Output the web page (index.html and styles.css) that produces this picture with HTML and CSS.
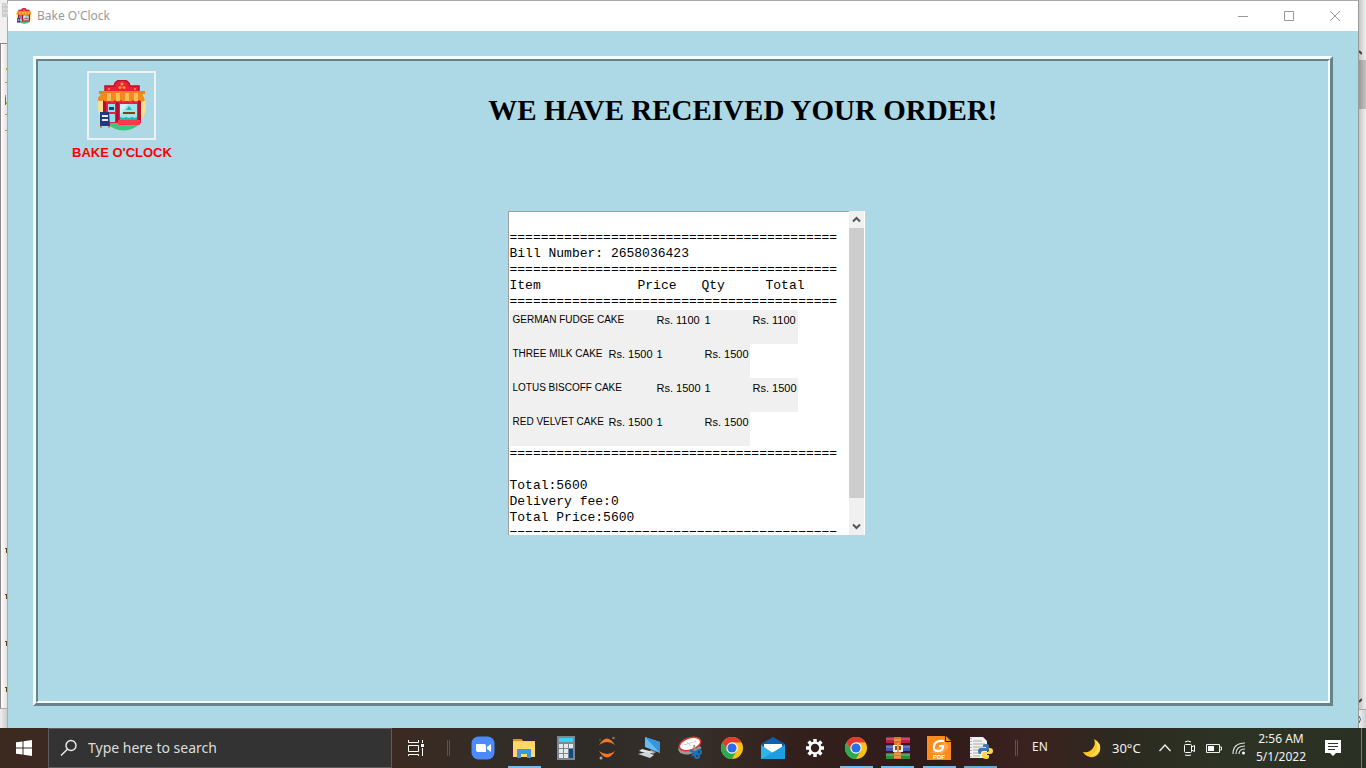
FILE: index.html
```
<!DOCTYPE html>
<html lang="en">
<head>
<meta charset="utf-8">
<title>Bake O'Clock</title>
<link rel="stylesheet" href="styles.css">
</head>
<body>
<svg class="defs" aria-hidden="true">
  <symbol id="shop" viewBox="0 0 48 51">
    <circle cx="24" cy="26" r="24" fill="#ffe08a"/>
    <path d="M8 43h35a24 24 0 0 1-35 0z" fill="#3cc480"/>
    <path d="M7 11V6h9c0-8 16-8 16 0h9v5z" fill="#e6213f"/>
    <path d="M7 11V6h9c0-8 16-8 16 0h9v5" fill="none" stroke="#b5102f" stroke-width="1.5"/>
    <circle cx="24" cy="4" r="1.6" fill="#ff9811"/><circle cx="22" cy="7.500" r="1.600" fill="#ff9811"/><circle cx="26" cy="7.500" r="1.600" fill="#ff9811"/>
    <circle cx="11" cy="9" r="1" fill="#ff9811"/><circle cx="37" cy="9" r="1" fill="#ff9811"/>
    <path d="M5 20h38v23H5z" fill="#e6213f"/>
    <path d="M5 20h3v14H5zM18 22h3v20h-3zM40 20h3v20h-3z" fill="#b5102f"/>
    <path d="M10 24h7v18h-7z" fill="#8fe0e8"/><path d="M10 32h7v2h-7z" fill="#e6213f"/><path d="M11 27h5v3h-5z" fill="#1d3f86"/>
    <path d="M22 24h17v15H22z" fill="#9fe4ea"/><path d="M22 24l8 0-8 11z" fill="#c9f4f6"/>
    <path d="M31 26l3 4h-6z" fill="#18bdb0"/><path d="M25 32h12v2H25z" fill="#8a3a20"/>
    <path d="M22 37l3 1 3-1 3 1 3-1 3 1 2-1v3H22z" fill="#18bdb0"/>
    <path d="M20 40h22v5H20z" fill="#ff3b4b"/>
    <path d="M1 11h46v3H1z" fill="#f57f17"/>
    <path d="M4 13h40l3 7q-3 3-6 0-3 3-6 0-3 3-6 0-3 3-6 0-3 3-6 0-3 3-6 0-3 3-6 0-3 3-6-1z" fill="#f58a1b"/>
    <path d="M9 13h4v8H9zM18 13h4v8h-4zM27 13h4v8h-4zM36 13h4v8h-4z" fill="#f3c05a"/>
    <path d="M3 46v2M11 46v2" stroke="#c98a5a" stroke-width="2"/>
    <path d="M2 32h9l1 14H2z" fill="#203a7d"/><path d="M4 36h6M4 40h6" stroke="#e8ecf5" stroke-width="2"/>
  </symbol>
  <symbol id="chrome" viewBox="0 0 24 24">
    <circle cx="12" cy="12" r="11" fill="#fbc116"/>
    <path d="M12 6.500H21.530A11 11 0 0 0 2.470 6.500L7.200 14.700 12 12z" fill="#e33b2e"/>
    <path d="M2.470 6.500A11 11 0 0 0 12 23L16.800 14.700H7.200z" fill="#2da94f"/>
    <circle cx="12" cy="12" r="5.700" fill="#fff"/><circle cx="12" cy="12" r="4.600" fill="#2a6fe8"/>
  </symbol>
</svg>

<div class="screen">
  <div class="desktop">
    <aside class="behind behind-left" aria-hidden="true">
      <div class="behind-bar"><svg width="6" height="16" viewBox="0 0 6 16"><path d="M0 1h6v14H0z" fill="#ccc"/><path d="M1 3h5M1 7h5M1 11h5" stroke="#eee" stroke-dasharray="2 1"/></svg></div>
      <div class="behind-page">
        <svg width="2" height="660"><g fill="#b5a800"><path d="M1 24h1v2h-1zM0 38h2v1h-2zM0 51h1v2h-1zM0 58h2v2h-2zM0 70h2v1h-2zM0 86h2v1h-2z"/></g><path d="M0 53h1v8H0z" fill="#2a9a2a"/><path d="M0 504h2v1H0zM1 504h1v5H1zM0 550h2v1H0zM1 550h1v5H1zM0 597h2v1H0zM1 597h1v5H1zM0 643h2v1H0zM1 643h1v5H1z" fill="#6a3a10"/></svg>
      </div>
      <div class="behind-foot"></div>
    </aside>

    <main class="window">
      <header class="titlebar">
        <svg class="app-icon"><use href="#shop"/></svg>
        <span class="app-name">Bake O'Clock</span>
        <button class="win-btn" aria-label="Minimize"><svg width="12" height="12"><path d="M1 6.500h10" stroke="#999"/></svg></button>
        <button class="win-btn" aria-label="Maximize"><svg width="12" height="12"><path d="M1.500 1.500h9v9h-9z" fill="none" stroke="#999"/></svg></button>
        <button class="win-btn" aria-label="Close"><svg width="12" height="12"><path d="M1 1l10 10M11 1L1 11" stroke="#999"/></svg></button>
      </header>

      <div class="client">
        <div class="ridge">
          <div class="ridge-inner">
            <div class="head">
              <div class="brand">
                <div class="logo"><svg width="48" height="51"><use href="#shop"/></svg></div>
                <div class="brand-name">BAKE O'CLOCK</div>
              </div>
              <h1>WE HAVE RECEIVED YOUR ORDER!</h1>
            </div>

            <div class="receipt-area">
              <section class="receipt" aria-label="Bill">
                <div class="bill">
                  <p>&nbsp;</p>
                  <p>==========================================</p>
                  <p>Bill Number: 2658036423</p>
                  <p>==========================================</p>
                  <table>
                    <thead>
                      <tr><th>Item</th><th>Price</th><th>Qty</th><th>Total</th></tr>
                      <tr><td>==========================================</td></tr>
                    </thead>
                    <tbody>
                      <tr class="wide"><td>GERMAN FUDGE CAKE</td><td>Rs. 1100</td><td>1</td><td>Rs. 1100</td></tr>
                      <tr><td>THREE MILK CAKE</td><td>Rs. 1500</td><td>1</td><td>Rs. 1500</td></tr>
                      <tr class="wide"><td>LOTUS BISCOFF CAKE</td><td>Rs. 1500</td><td>1</td><td>Rs. 1500</td></tr>
                      <tr><td>RED VELVET CAKE</td><td>Rs. 1500</td><td>1</td><td>Rs. 1500</td></tr>
                    </tbody>
                  </table>
                  <p>==========================================</p>
                  <p>&nbsp;</p>
                  <p>Total:5600</p>
                  <p>Delivery fee:0</p>
                  <p>Total Price:5600</p>
                  <p class="cut">==========================================</p>
                </div>
                <div class="scrollbar">
                  <button aria-label="Scroll up"><svg width="9" height="7"><path d="M1 5.500L4.500 2 8 5.500" fill="none" stroke="#555" stroke-width="2"/></svg></button>
                  <div class="thumb"></div>
                  <button aria-label="Scroll down"><svg width="9" height="7"><path d="M1 1.500L4.500 5 8 1.500" fill="none" stroke="#555" stroke-width="2"/></svg></button>
                </div>
              </section>
            </div>
          </div>
        </div>
      </div>
    </main>

    <aside class="behind behind-right" aria-hidden="true">
      <div class="behind-bar"></div>
      <div class="track"><svg width="3" height="5"><path d="M0 1l3 3" stroke="#444" stroke-width="2"/></svg><div class="track-thumb"></div><svg width="3" height="5"><path d="M0 4l3-3" stroke="#444" stroke-width="2"/></svg></div>
      <div class="behind-foot"><svg width="3" height="16"><path d="M0 6q3 3 0 7" fill="none" stroke="#345a80"/></svg></div>
    </aside>
  </div>

  <footer class="taskbar">
    <button class="start" aria-label="Start"><svg width="16" height="16"><path d="M0 2.300L6.500 1.400V7.500H0zM7.500 1.200L16 0V7.500H7.500zM0 8.500H6.500V14.600L0 13.700zM7.500 8.500H16V16L7.500 14.800z" fill="#fff"/></svg></button>
    <label class="search">
      <svg width="18" height="18"><circle cx="11" cy="6.500" r="5" fill="none" stroke="#eee" stroke-width="1.400"/><path d="M7.400 10.200L1 16.600" stroke="#eee" stroke-width="1.400"/></svg>
      <input type="text" placeholder="Type here to search" aria-label="Type here to search">
    </label>
    <button class="view" aria-label="Task view"><svg width="18" height="16"><path d="M1.500 0v2.500h10V0M1.500 5.500h10v6h-10zM1.500 16v-1.500h10V16M15.500 0v3M15.500 8v8" fill="none" stroke="#fff"/><path d="M14 4h3v3h-3z" fill="#fff"/></svg></button>
    <span class="sep"></span>
    <nav class="apps" aria-label="Applications">
      <button aria-label="Zoom"><svg width="24" height="24"><rect x=".5" y=".5" width="23" height="23" rx="7" fill="#4a8cff"/><path d="M5 8h8q2 0 2 2v6H7q-2 0-2-2zM16 11l4-3v8l-4-3z" fill="#fff"/></svg></button>
      <button class="open" aria-label="File Explorer"><svg width="24" height="24"><path d="M1 3h8l2 2h12v16H1z" fill="#fbc94b"/><path d="M1 3h8l1.500 2H1z" fill="#d99a12"/><path d="M1 6h22v15H1z" fill="#ffd867"/><path d="M5 22v-8q0-1 1-1h12q1 0 1 1v8h-4v-4H9v4z" fill="#3e96dc"/></svg></button>
      <button aria-label="Calculator"><svg width="24" height="24"><path d="M3 0h18v24H3z" fill="#7c8790"/><path d="M5 2h14v4H5z" fill="#35d4f5"/><path d="M5 8h4v4H5zM10 8h4v4h-4zM15 8h4v4h-4zM5 13h4v4H5zM10 13h4v4h-4zM5 18h4v4H5zM10 18h4v4h-4z" fill="#e4e9ec"/><path d="M15 13h4v9h-4z" fill="#134a86"/></svg></button>
      <button aria-label="Jupyter"><svg width="24" height="24"><path d="M4 9q8-13 16 0-8-6-16 0zM4 15q8 13 16 0-8 6-16 0z" fill="#f37726"/><circle cx="18.500" cy="2" r="1.300" fill="#777"/><circle cx="6" cy="22" r="1.500" fill="#aaa"/><circle cx="5" cy="4" r=".8" fill="#777"/></svg></button>
      <button aria-label="Remote desktop"><svg width="24" height="24"><path d="M8 1l15 5v11L8 11z" fill="#65bdf4"/><path d="M8 1l15 5v11z" fill="#3596df"/><path d="M14 14l5 2-3 2-4-2z" fill="#9ea6ad"/><path d="M5 13l11 3-4 2-10-3z" fill="#e1e5e8"/><path d="M1 18l9-2 7 3-4 3z" fill="#cfd4d8"/></svg></button>
      <button aria-label="Snipping Tool"><svg width="24" height="24"><ellipse cx="11" cy="11" rx="11" ry="7" transform="rotate(-18 11 11)" fill="#999"/><ellipse cx="12" cy="8" rx="11" ry="6" transform="rotate(-18 12 8)" fill="#fff" stroke="#d33a36" stroke-width="1.500"/><path d="M6 9l12-4M9 6l4 4" stroke="#ccc"/><path d="M17 15l-1-6M18 15l5-4" stroke="#999" stroke-width="2"/><g fill="none" stroke="#1674b9" stroke-width="2"><circle cx="19" cy="20" r="2"/><circle cx="21" cy="16" r="2"/><path d="M12 15l5 1 2 3M14 20l5-5"/></g></svg></button>
      <button aria-label="Google Chrome"><svg width="24" height="24"><use href="#chrome"/></svg></button>
      <button aria-label="Mail"><svg width="24" height="24"><path d="M0 8l12-7 12 7v15H0z" fill="#0f5fae"/><path d="M3 8h18v9H3z" fill="#fff"/><path d="M0 9l12 8L24 9v14H0z" fill="#2db4ee"/><path d="M0 23l14-8L24 9v14z" fill="#1b9fe4"/></svg></button>
      <button aria-label="Settings"><svg width="24" height="24"><g stroke="#fff" stroke-width="3.500"><path d="M12 3v18M3 12h18M5.600 5.600l12.800 12.800M18.400 5.600L5.600 18.400"/></g><circle cx="12" cy="12" r="6.500" fill="#fff"/><circle cx="12" cy="12" r="4.200" fill="#33201d"/></svg></button>
      <button class="open" aria-label="Google Chrome window"><svg width="24" height="24"><use href="#chrome"/></svg></button>
      <button class="open" aria-label="WinRAR"><svg width="24" height="24"><path d="M0 1h24v6H0z" fill="#b8214a"/><path d="M0 9h24v6H0z" fill="#4c52b5"/><path d="M0 17h24v6H0z" fill="#2f8b3a"/><path d="M0 3h24M0 11h24M0 19h24" stroke="#ffffff66"/><path d="M8 1h7v22H8z" fill="#d9742c"/><path d="M8 4h7M8 18h7M8 21h7" stroke="#f5b56a"/><path d="M7 9h10v7H7z" fill="#eee"/><path d="M9 10h2v4H9zM13 10h2v4h-2z" fill="#8a4b20"/><path d="M11 7h2v9h-2z" fill="#e7a23a"/></svg></button>
      <button class="open" aria-label="Foxit PDF"><svg width="24" height="24"><path d="M0 0h18v6h6v18H0z" fill="#fb8b1e"/><path d="M19 0l5 5h-5z" fill="#fb8b1e"/><path d="M4 17L18 5l4 6-7 7z" fill="#ffa64d"/><path d="M17 5q-9-1-10 5-1 5 4 5 5 0 5-5h-4" fill="none" stroke="#fff" stroke-width="2.200"/><text x="12" y="23" class="pdf">PDF</text></svg></button>
      <button class="open split" aria-label="Python"><svg width="24" height="24"><path d="M1 1h13l4 4v17H1z" fill="#f1f1f1"/><path d="M4 5h9M4 8h12M4 11h12M4 14h8M4 17h7M4 20h7" stroke="#aaa"/><path d="M2 2v20" stroke="#777" stroke-dasharray="1 2"/><path d="M14 9q0-1 3-1t3 2v3q0 2-2 2h-4q-2 0-2 2v1h-1q-2 0-2-3 0-3 3-3h5v-1h-3z" fill="#3c78b0"/><path d="M20 12h1q3 0 3 3t-3 3h-4v1h3v2q0 2-3 2t-4-2v-3q0-2 2-2h3q2 0 2-2z" fill="#ffd544"/></svg></button>
    </nav>
    <span class="sep"></span>
    <button class="lang">EN</button>
    <button class="weather"><svg width="20" height="20"><path d="M12 1q8 4 6 12-3 7-10 6-5-1-7-5 7 1 10-4 3-4 1-9z" fill="#ffc72b"/><path d="M13 2q7 4 4 11-3 5-9 5 5-2 7-7 1-4-2-9z" fill="#ffe25a"/></svg>30°C</button>
    <div class="tray">
      <button aria-label="Show hidden icons"><svg width="14" height="16"><path d="M1.500 11L7 5l5.500 6" fill="none" stroke="#eee" stroke-width="1.400"/></svg></button>
      <button aria-label="Camera"><svg width="14" height="16"><rect x="2.500" y="4.500" width="7" height="8" rx="1" fill="none" stroke="#fff"/><path d="M9.500 7l3-1.500v6l-3-1.500M3 2q3-2 6 0M3 15q3 1 6 0" fill="none" stroke="#fff"/></svg></button>
      <button aria-label="Battery"><svg width="16" height="16"><path d="M.5 4.500h13v8H.5zM14 7h1.500v3H14" fill="none" stroke="#eee"/><path d="M2 6h6v5H2z" fill="#fff"/></svg></button>
      <button aria-label="Network"><svg width="14" height="16"><g fill="none" stroke="#ddd" stroke-width="1.200"><path d="M1 14Q1 3 13 3M4 14Q4 6 13 6M7 14Q7 9 13 9"/></g><circle cx="11.500" cy="13" r="1.500" fill="#fff"/></svg></button>
    </div>
    <button class="clock"><span>2:56 AM</span><span>5/1/2022</span></button>
    <button class="notice" aria-label="Notifications"><svg width="16" height="16"><path d="M0 0h16v13h-5l-3 3-3-3H0z" fill="#fff"/><path d="M3 3.500h10M3 6.500h10M3 9.500h7" stroke="#333"/></svg></button>
    <span class="peek"></span>
  </footer>
</div>
</body>
</html>
```
FILE: styles.css
```
* { box-sizing: border-box; }
body { margin: 0; font-family: "Noto Sans", "Open Sans", sans-serif; }
p, h1 { margin: 0; }
button { border: 0; padding: 0; background: none; color: inherit; font: inherit; display: flex; align-items: center; justify-content: center; }
svg { display: block; flex: none; }
.defs { display: none; }

.screen { height: 100vh; display: flex; flex-direction: column; }
.desktop { flex: 1; display: flex; min-height: 0; background: #f0f0f0; }

/* Windows partly covered by the main one */
.behind { display: flex; flex-direction: column; }
.behind-left { width: 8px; border-right: 1px solid #b5a8a5; }
.behind-right { width: 7px; background: linear-gradient(90deg, #c4c4c4, #f0f0f0); }
.behind-bar { height: 43px; padding-top: 2px; padding-left: 2px; }
.behind-right .behind-bar { height: 41px; }
.behind-page {
  flex: 1;
  min-height: 0;
  overflow: hidden;
  display: flex;
  justify-content: flex-end;
  border-top: 1px solid #888;
  border-left: 1px solid #888;
  border-bottom: 1px solid #aaa;
  background: linear-gradient(90deg, #fff, #e4e0e0);
}
.behind-foot { height: 19px; background: linear-gradient(90deg, #eee, #ccc); }
.behind-right .behind-foot { border-top: 1px solid #aaa; }
.track { flex: 1; display: flex; flex-direction: column; justify-content: space-between; padding: 9px 0 6px; }
.track-thumb { height: 49px; margin-top: 5px; margin-bottom: auto; background: linear-gradient(90deg, #999, #c4c4c4); }

.window { flex: 1; display: flex; flex-direction: column; border-top: 1px solid #aaa; border-right: 1px solid #999; }
.titlebar { height: 30px; display: flex; align-items: center; padding-left: 8px; background: #fff; }
.app-icon { width: 16px; height: 16px; margin-right: 5px; }
.app-name { flex: 1; color: #999; font-size: 12px; line-height: 16px; }
.win-btn { width: 46px; height: 30px; }
.client { flex: 1; display: flex; padding: 25px 25px 22px; background: #add8e6; }

.ridge { flex: 1; display: flex; border: 3px solid; border-color: #f4ffff #68828a #68828a #f4ffff; }
.ridge-inner { flex: 1; border: 2px solid; border-color: #68828a #f4ffff #f4ffff #68828a; }
.head { height: 150px; display: flex; align-items: flex-start; padding: 10px 14px 0 34px; }
.brand { display: flex; flex-direction: column; align-items: center; }
.logo { width: 69px; height: 69px; display: flex; align-items: center; justify-content: center; border: 2px solid #f0f0f0; }
.brand-name { padding-top: 4px; color: #f00; font: bold 13px/18px "Liberation Sans", Arial, sans-serif; }
h1 { flex: 1; padding-top: 22px; text-align: center; font: bold 29px/34px "Liberation Serif", "Times New Roman", serif; }

.receipt-area { display: flex; justify-content: center; padding-left: 6px; }
.receipt { width: 357px; display: flex; background: #fff; border-right: 1px solid #fff; }
.bill { flex: 1; min-width: 0; padding: 2px 0 1px 1px; border-top: 1px solid #a0a0a0; border-left: 1px solid #a0a0a0; font: 13px/16px "Liberation Mono", "Courier New", monospace; white-space: nowrap; }
.bill table { display: block; }
.bill thead, .bill tbody { display: block; }
.bill tr { display: flex; }
.bill th, .bill td { padding: 0; font-weight: normal; text-align: left; }
.bill th { width: 64px; }
.bill th:first-child { width: 128px; }
.bill tbody tr { width: 240px; height: 34px; background: #f0f0f0; font: 11px/20px "Liberation Sans", Arial, sans-serif; }
.bill tbody tr.wide { width: 288px; }
.bill tbody td { width: 48px; padding-left: 3px; }
.bill tbody td:first-child { width: 96px; font-size: 10px; }
.bill tbody .wide td:first-child { width: 144px; }
.cut { height: 8px; overflow: hidden; }
.scrollbar { width: 15px; display: flex; flex-direction: column; background: #f0f0f0; }
.scrollbar button { height: 17px; }
.thumb { height: 270px; margin-bottom: auto; background: #cdcdcd; }

.taskbar { height: 40px; display: flex; align-items: stretch; color: #f2f2f2; background: linear-gradient(90deg, #3c2a21 0, #3a2a22 30%, #332d26 36%, #2f2b27 44%, #36302a 50%, #33201c 58%, #301b1a 68%, #3a221f 76%, #2c2a20 82%, #2c3324 90%, #2a3023 100%); }
.start { width: 48px; }
.search { width: 344px; display: flex; align-items: center; padding-left: 11px; gap: 10px; background: #333; border: 1px solid #5c5c5c; }
.search input { flex: 1; min-width: 0; padding: 0; border: 0; outline: 0; background: none; color: #ddd; font: 14px/20px "Noto Sans", sans-serif; }
.search input::placeholder { color: #ddd; opacity: 1; }
.view { width: 48px; }
.sep { width: 3px; height: 16px; margin: auto 7px; border: solid #5b5450; border-width: 0 1px; }
.apps { width: 531px; margin-left: 9px; display: flex; justify-content: space-between; }
.apps button { width: 33px; border-bottom: 2px solid transparent; border-top: 2px solid transparent; }
.apps .open { border-bottom-color: #76b9ed; }
.apps .split { border-bottom-color: #6aa6d6; }
.pdf { fill: #fff; font: bold 6px "Liberation Sans", Arial, sans-serif; text-anchor: middle; }
.apps + .sep { margin-left: 18px; }
.lang { width: 30px; height: 36px; font-size: 12px; }
.weather { margin-left: 27px; gap: 10px; font-size: 13px; }
.tray { margin-left: auto; display: flex; gap: 10px; }
.clock { width: 70px; flex-direction: column; font-size: 12px; line-height: 18px; }
.notice { width: 34px; margin-right: 11px; }
.peek { width: 5px; border-left: 1px solid #777; }
```
